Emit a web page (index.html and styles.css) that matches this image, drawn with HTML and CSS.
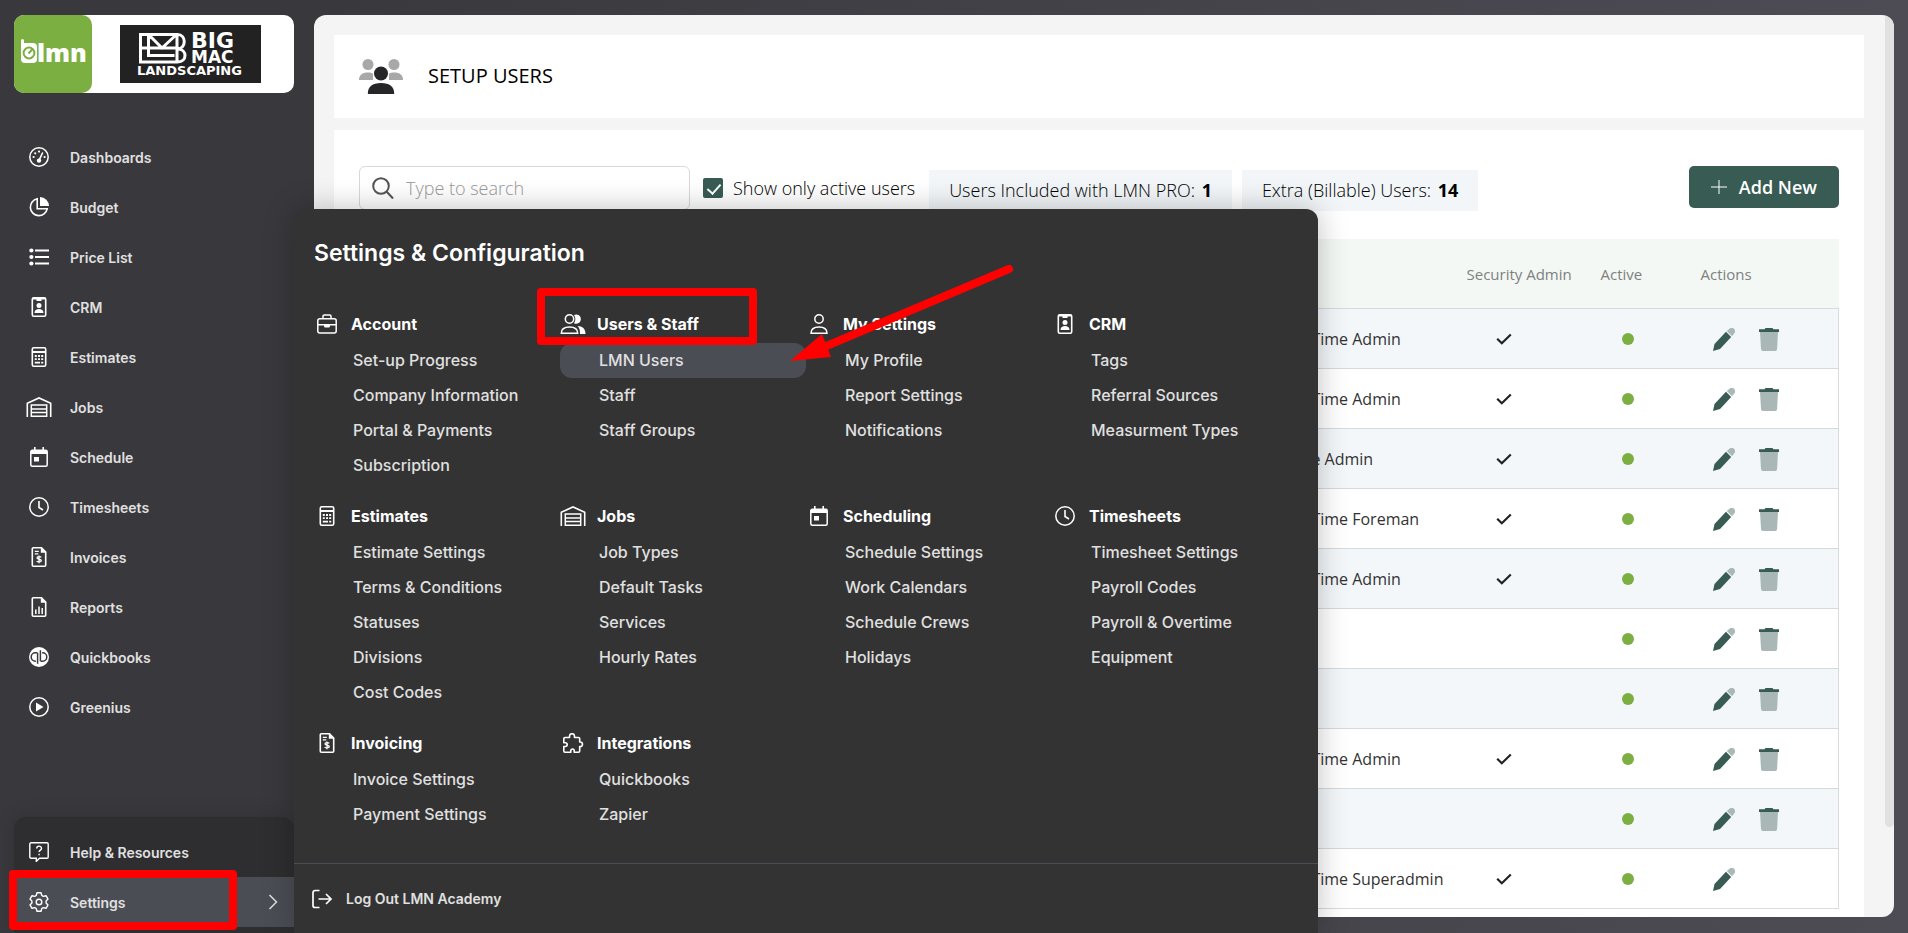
FILE: index.html
```html
<!DOCTYPE html>
<html lang="en">
<head>
  <meta charset="UTF-8">
  <meta name="viewport" content="width=device-width, initial-scale=1.0">
  <link rel="stylesheet" href="styles.css">
  <title>Setup Users</title>
</head>
<body>
  <!-- icon set -->
  <svg class="sprite" aria-hidden="true">
    <symbol id="i-dash" viewBox="0 0 20 20"><circle cx="10" cy="10" r="9.2" fill="none" stroke="currentColor" stroke-width="1.5"/><circle cx="4.6" cy="10" r="1.1"/><circle cx="6.2" cy="6.3" r="1.1"/><circle cx="10" cy="4.6" r="1.1"/><circle cx="15.6" cy="10" r="1.1"/><circle cx="10" cy="13.6" r="2.2"/><path d="M10 13.4 13.5 6" stroke="currentColor" stroke-width="1.6" stroke-linecap="round"/></symbol>
    <symbol id="i-budget" viewBox="0 0 20 20"><path d="M8.2 1.8a8.5 8.5 0 1 0 10 10H8.2z" fill="none" stroke="currentColor" stroke-width="1.6"/><path d="M11 0a9 9 0 0 1 9 9h-9z"/></symbol>
    <symbol id="i-list" viewBox="0 0 20 20"><circle cx="2.4" cy="3.5" r="2.1"/><circle cx="2.4" cy="10" r="2.1"/><circle cx="2.4" cy="16.5" r="2.1"/><path d="M6 3.5h14M6 10h14M6 16.5h14" stroke="currentColor" stroke-width="1.8"/></symbol>
    <symbol id="i-crm" viewBox="0 0 20 20"><rect x="3.3" y=".8" width="13.4" height="18.4" rx="1.4" fill="none" stroke="currentColor" stroke-width="1.6"/><path d="M3 1h14v1.5h-4.5V4h-5V2.5H3z"/><circle cx="10" cy="8.5" r="2.5"/><path d="M5.5 16c0-3 2-4 4.5-4s4.5 1 4.5 4z"/></symbol>
    <symbol id="i-calc" viewBox="0 0 20 20"><rect x="3.3" y=".8" width="13.4" height="18.4" rx="1.5" fill="none" stroke="currentColor" stroke-width="1.6"/><path d="M3 5h14M5.8 9h2M9 9h2M12.2 9h2M5.8 12.2h2M9 12.2h2M12.2 12.2h2M5.8 15.6h5.2M12.2 15.6h2" stroke="currentColor" stroke-width="1.8"/></symbol>
    <symbol id="i-jobs" viewBox="0 0 25 20"><path d="M.8 20V6.2L12.5 1l11.7 5.2V20" fill="none" stroke="currentColor" stroke-width="1.6"/><path d="M4.8 8h15.4v11.2H4.8zM5 12h15M5 15.6h15" fill="none" stroke="currentColor" stroke-width="1.5"/></symbol>
    <symbol id="i-cal" viewBox="0 0 20 20"><rect x="1.8" y="3.3" width="16.4" height="15.9" rx="1.5" fill="none" stroke="currentColor" stroke-width="1.5"/><path d="M2 3h16v4H2zM5 0h1.6v4H5zM13.4 0H15v4h-1.6z"/><rect x="5" y="10" width="5" height="4.5"/></symbol>
    <symbol id="i-clock" viewBox="0 0 20 20"><circle cx="10" cy="10" r="9.2" fill="none" stroke="currentColor" stroke-width="1.5"/><path d="M10 4v6.5l4 2.5" fill="none" stroke="currentColor" stroke-width="1.6"/></symbol>
    <symbol id="i-invoice" viewBox="0 0 20 20"><path d="M4.5.8h8l4.2 4.3v13.1a1 1 0 0 1-1 1H4.3a1 1 0 0 1-1-1V1.8a1 1 0 0 1 1.2-1z" fill="none" stroke="currentColor" stroke-width="1.6"/><path d="M11.8.5v5.3h5z"/><path d="M5.8 4.3h4M5.8 6.8h3.5M12.2 10.3c-.5-.8-4.2-1-4.2.7 0 1.6 4.3.9 4.3 2.7 0 1.6-3.8 1.6-4.6.3M10 8.5v7.7" fill="none" stroke="currentColor" stroke-width="1.3"/></symbol>
    <symbol id="i-report" viewBox="0 0 20 20"><path d="M4.5.8h8l4.2 4.3v13.1a1 1 0 0 1-1 1H4.3a1 1 0 0 1-1-1V1.8a1 1 0 0 1 1.2-1z" fill="none" stroke="currentColor" stroke-width="1.6"/><path d="M11.8.5v5.3h5z"/><path d="M6.8 12.5V17M10 9.5V17M13.2 11V17" stroke="currentColor" stroke-width="1.5"/></symbol>
    <symbol id="i-qb" viewBox="0 0 20 20"><circle cx="10" cy="10" r="10"/><path d="M8.3 5.8H6.4a4.2 4.2 0 0 0 0 8.4h.5M8.6 5.8v11M11.7 14.2h1.9a4.2 4.2 0 0 0 0-8.4h-.5M11.4 14.2v-11" fill="none" stroke="#39383c" stroke-width="1.5"/></symbol>
    <symbol id="i-play" viewBox="0 0 20 20"><circle cx="10" cy="10" r="9.2" fill="none" stroke="currentColor" stroke-width="1.5"/><path d="M7 5.5v9l7.5-4.5z"/></symbol>
    <symbol id="i-help" viewBox="0 0 20 20"><path d="M2 .8h16a1.2 1.2 0 0 1 1.2 1.2v13a1.2 1.2 0 0 1-1.2 1.2h-7.5L7.3 19.4v-3.2H2A1.2 1.2 0 0 1 .8 15V2A1.2 1.2 0 0 1 2 .8z" fill="none" stroke="currentColor" stroke-width="1.4"/><path d="M7.7 6.6c0-3.2 4.8-3.2 4.8-.2 0 1.7-2.4 1.8-2.4 3.7M10.1 11.7v1.6" fill="none" stroke="currentColor" stroke-width="1.4"/></symbol>
    <symbol id="i-gear" viewBox="0 0 20 20"><path d="M8 .8h4l.8 2.7 1.5.9 2.7-.7 2 3.4-1.9 2v1.8l1.9 2-2 3.4-2.7-.7-1.5.9-.8 2.7H8l-.8-2.7-1.5-.9-2.7.7-2-3.4 1.9-2V9.1L1 7.1l2-3.4 2.7.7 1.5-.9z" fill="none" stroke="currentColor" stroke-width="1.4" stroke-linejoin="round"/><circle cx="10" cy="10" r="2.8" fill="none" stroke="currentColor" stroke-width="1.4"/></symbol>
    <symbol id="i-case" viewBox="0 0 20 20"><rect x=".8" y="4.8" width="18.4" height="14.2" rx="2" fill="none" stroke="currentColor" stroke-width="1.5"/><path d="M6 4.5V2.3A1.3 1.3 0 0 1 7.3 1h5.4A1.3 1.3 0 0 1 14 2.3v2.2M1 10.8h18" fill="none" stroke="currentColor" stroke-width="1.5"/><path d="M7 10.5h6V12c0 1-.8 1.5-1.5 1.5h-3C7.8 13.5 7 13 7 12z"/></symbol>
    <symbol id="i-users" viewBox="0 0 25 20"><circle cx="9" cy="5" r="4.2" fill="none" stroke="currentColor" stroke-width="1.5"/><path d="M.8 19.2c0-4.3 2.8-6.3 8.2-6.3s8.2 2 8.2 6.3z" fill="none" stroke="currentColor" stroke-width="1.5"/><path d="M13.5.9a4.7 4.7 0 1 1 0 8.4c1.8-2.5 1.8-5.9 0-8.4zM17 12c5 .3 8 2.5 8 8h-5.5c0-4-.5-6-2.5-8z"/></symbol>
    <symbol id="i-user" viewBox="0 0 20 20"><circle cx="10" cy="5" r="4.2" fill="none" stroke="currentColor" stroke-width="1.5"/><path d="M2 19.2c0-4.3 2.6-6.3 8-6.3s8 2 8 6.3z" fill="none" stroke="currentColor" stroke-width="1.5"/></symbol>
    <symbol id="i-puzzle" viewBox="0 0 20 20"><path d="M2 4.5H6.5V3.2a2.4 2.4 0 0 1 5 0v1.3h4a1.2 1.2 0 0 1 1.2 1.2V9h.5a2.3 2.3 0 0 1 0 4.6h-.5v4.400a1.2 1.2 0 0 1-1.200 1.200h-4.300v-1.500a1.700 1.700 0 0 0-3.400 0v1.500H2a1.200 1.200 0 0 1-1.200-1.200v-4.500h1.500a1.900 1.900 0 0 0 0-3.800H.8V5.700A1.200 1.200 0 0 1 2 4.500z" fill="none" stroke="currentColor" stroke-width="1.6" stroke-linejoin="round"/></symbol>
    <symbol id="i-logout" viewBox="0 0 20 20"><path d="M7.5 1.5H3A2 2 0 0 0 1 3.5v13a2 2 0 0 0 2 2h4.5M6.5 10H19M14 5l5 5-5 5" fill="none" stroke="currentColor" stroke-width="1.7"/></symbol>
    <symbol id="i-check" viewBox="0 0 16 12"><path d="M1.2 5.8 5.8 10.2 14.8 1.5" fill="none" stroke="#222" stroke-width="2.2"/></symbol>
    <symbol id="i-pencil" viewBox="0 0 22 23"><path d="M0 23l1.5-7L13 3.8l5.200 5.200L7 21z" fill="#385c53"/><path d="M13.800 3 16.500.8a3 3 0 0 1 4.500 0 3.500 3.500 0 0 1 0 4.900L19 8.200z" fill="#a9b8b6"/></symbol>
    <symbol id="i-trash" viewBox="0 0 20 23"><path d="M1 4h18l-.9 17a2 2 0 0 1-2 2H4a2 2 0 0 1-2-2z" fill="#a9b8b6"/><path d="M0 1.2h5.500L6.500 0h7l1 1.200H20V4H0z" fill="#385c53"/></symbol>
  </svg>

  <aside class="sidebar">
    <div class="brand">
      <svg class="brand-lmn" viewBox="0 0 78 78" role="img" aria-label="lmn">
        <path d="M8.5 25.5v18" stroke="#fff" stroke-width="3" stroke-linecap="round"/>
        <rect x="7" y="28" width="16" height="20" rx="4" fill="#fff"/>
        <circle cx="15" cy="38" r="5.4" fill="none" stroke="#7caf41" stroke-width="2"/>
        <path d="M14.5 38.5 18.5 34" stroke="#7caf41" stroke-width="2"/>
        <text x="23" y="47" class="lmn-text">lmn</text>
      </svg>
      <svg class="brand-company" viewBox="0 0 141 58" role="img" aria-label="Big Mac Landscaping">
        <rect width="141" height="58" fill="#222"/>
        <g fill="none" stroke="#fff" stroke-width="3">
          <path d="M20.5 9.5h37c9 0 9 14 0 14.5 10 0 10 13 0 13h-37zM28.5 9.5v21h26M57 9.5V37M20.5 23h37M29 10l13 13 14-13"/>
        </g>
        <text x="71" y="23" class="co-big">BIG</text>
        <text x="71" y="38" class="co-mac">MAC</text>
        <text x="17" y="50" class="co-land">LANDSCAPING</text>
      </svg>
    </div>

    <nav class="nav">
      <a href="#"><svg class="icon"><use href="#i-dash"/></svg>Dashboards</a>
      <a href="#"><svg class="icon"><use href="#i-budget"/></svg>Budget</a>
      <a href="#"><svg class="icon"><use href="#i-list"/></svg>Price List</a>
      <a href="#"><svg class="icon"><use href="#i-crm"/></svg>CRM</a>
      <a href="#"><svg class="icon"><use href="#i-calc"/></svg>Estimates</a>
      <a href="#"><svg class="icon"><use href="#i-jobs"/></svg>Jobs</a>
      <a href="#"><svg class="icon"><use href="#i-cal"/></svg>Schedule</a>
      <a href="#"><svg class="icon"><use href="#i-clock"/></svg>Timesheets</a>
      <a href="#"><svg class="icon"><use href="#i-invoice"/></svg>Invoices</a>
      <a href="#"><svg class="icon"><use href="#i-report"/></svg>Reports</a>
      <a href="#"><svg class="icon"><use href="#i-qb"/></svg>Quickbooks</a>
      <a href="#"><svg class="icon"><use href="#i-play"/></svg>Greenius</a>
    </nav>

    <nav class="nav nav-bottom">
      <a href="#"><svg class="icon"><use href="#i-help"/></svg>Help &amp; Resources</a>
      <a href="#" class="active"><svg class="icon"><use href="#i-gear"/></svg>Settings
        <svg class="chevron" viewBox="0 0 10 16"><path d="M1.5 1 8.5 8l-7 7" fill="none" stroke="currentColor" stroke-width="1.5"/></svg>
      </a>
      <div class="mark mark-settings"></div>
    </nav>
  </aside>

  <main class="content">
    <header class="card page-title">
      <svg viewBox="0 0 44 35"><g fill="#a8a8a8"><ellipse cx="9" cy="5.5" rx="5.5" ry="5.5"/><ellipse cx="35" cy="5.5" rx="5.5" ry="5.5"/><path d="M0 21c0-5 3-7.5 9-7.5 3 0 4.5.5 5 1.5V21zM44 21c0-5-3-7.5-9-7.5-3 0-4.5.5-5 1.5V21z"/></g><ellipse cx="22" cy="14.5" rx="7" ry="7" fill="#262628"/><path d="M8.8 35c0-7.500 4.500-11 13.200-11s13.200 3.500 13.200 11z" fill="#262628"/></svg>
      <h1>SETUP USERS</h1>
    </header>

    <section class="card users">
      <div class="toolbar">
        <label class="search">
          <svg viewBox="0 0 22 22"><circle cx="9" cy="9" r="7.8" fill="none" stroke="#555" stroke-width="2"/><path d="M14.5 14.5 21 21.5" stroke="#555" stroke-width="2"/></svg>
          <input type="text" placeholder="Type to search" aria-label="Type to search">
        </label>
        <label class="only-active"><input type="checkbox" checked>Show only active users</label>
        <div class="counts">
          <div class="count">Users Included with LMN PRO: <b>1</b></div>
          <div class="count">Extra (Billable) Users: <b>14</b></div>
        </div>
        <button class="add-btn"><svg viewBox="0 0 16 16"><path d="M8 1v14M0 8h16" stroke="#fff" stroke-width="1"/></svg>Add New</button>
      </div>

      <table>
        <thead>
          <tr><th></th><th class="role"></th><th class="sec">Security Admin</th><th class="act">Active</th><th class="ops">Actions</th></tr>
        </thead>
        <tbody>
          <tr><td></td><td>Part Time Admin</td><td class="sec"><svg><use href="#i-check"/></svg></td><td class="act"><span class="dot"></span></td><td class="ops"><button aria-label="Edit"><svg><use href="#i-pencil"/></svg></button><button aria-label="Delete"><svg><use href="#i-trash"/></svg></button></td></tr>
          <tr><td></td><td>Part Time Admin</td><td class="sec"><svg><use href="#i-check"/></svg></td><td class="act"><span class="dot"></span></td><td class="ops"><button aria-label="Edit"><svg><use href="#i-pencil"/></svg></button><button aria-label="Delete"><svg><use href="#i-trash"/></svg></button></td></tr>
          <tr><td></td><td>Office Admin</td><td class="sec"><svg><use href="#i-check"/></svg></td><td class="act"><span class="dot"></span></td><td class="ops"><button aria-label="Edit"><svg><use href="#i-pencil"/></svg></button><button aria-label="Delete"><svg><use href="#i-trash"/></svg></button></td></tr>
          <tr><td></td><td>Part Time Foreman</td><td class="sec"><svg><use href="#i-check"/></svg></td><td class="act"><span class="dot"></span></td><td class="ops"><button aria-label="Edit"><svg><use href="#i-pencil"/></svg></button><button aria-label="Delete"><svg><use href="#i-trash"/></svg></button></td></tr>
          <tr><td></td><td>Part Time Admin</td><td class="sec"><svg><use href="#i-check"/></svg></td><td class="act"><span class="dot"></span></td><td class="ops"><button aria-label="Edit"><svg><use href="#i-pencil"/></svg></button><button aria-label="Delete"><svg><use href="#i-trash"/></svg></button></td></tr>
          <tr><td></td><td></td><td class="sec"></td><td class="act"><span class="dot"></span></td><td class="ops"><button aria-label="Edit"><svg><use href="#i-pencil"/></svg></button><button aria-label="Delete"><svg><use href="#i-trash"/></svg></button></td></tr>
          <tr><td></td><td></td><td class="sec"></td><td class="act"><span class="dot"></span></td><td class="ops"><button aria-label="Edit"><svg><use href="#i-pencil"/></svg></button><button aria-label="Delete"><svg><use href="#i-trash"/></svg></button></td></tr>
          <tr><td></td><td>Part Time Admin</td><td class="sec"><svg><use href="#i-check"/></svg></td><td class="act"><span class="dot"></span></td><td class="ops"><button aria-label="Edit"><svg><use href="#i-pencil"/></svg></button><button aria-label="Delete"><svg><use href="#i-trash"/></svg></button></td></tr>
          <tr><td></td><td></td><td class="sec"></td><td class="act"><span class="dot"></span></td><td class="ops"><button aria-label="Edit"><svg><use href="#i-pencil"/></svg></button><button aria-label="Delete"><svg><use href="#i-trash"/></svg></button></td></tr>
          <tr><td></td><td>Part Time Superadmin</td><td class="sec"><svg><use href="#i-check"/></svg></td><td class="act"><span class="dot"></span></td><td class="ops"><button aria-label="Edit"><svg><use href="#i-pencil"/></svg></button></td></tr>
        </tbody>
      </table>
    </section>
    <div class="scroll-thumb"></div>
  </main>

  <!-- settings flyout -->
  <div class="flyout">
    <h2>Settings &amp; Configuration</h2>
    <div class="groups">
      <section>
        <h3><svg class="icon"><use href="#i-case"/></svg>Account</h3>
        <a href="#">Set-up Progress</a>
        <a href="#">Company Information</a>
        <a href="#">Portal &amp; Payments</a>
        <a href="#">Subscription</a>
      </section>
      <section>
        <h3><svg class="icon"><use href="#i-users"/></svg>Users &amp; Staff</h3>
        <a href="#" class="selected">LMN Users</a>
        <a href="#">Staff</a>
        <a href="#">Staff Groups</a>
      </section>
      <section>
        <h3><svg class="icon"><use href="#i-user"/></svg>My Settings</h3>
        <a href="#">My Profile</a>
        <a href="#">Report Settings</a>
        <a href="#">Notifications</a>
      </section>
      <section>
        <h3><svg class="icon"><use href="#i-crm"/></svg>CRM</h3>
        <a href="#">Tags</a>
        <a href="#">Referral Sources</a>
        <a href="#">Measurment Types</a>
      </section>
      <section>
        <h3><svg class="icon"><use href="#i-calc"/></svg>Estimates</h3>
        <a href="#">Estimate Settings</a>
        <a href="#">Terms &amp; Conditions</a>
        <a href="#">Statuses</a>
        <a href="#">Divisions</a>
        <a href="#">Cost Codes</a>
      </section>
      <section>
        <h3><svg class="icon"><use href="#i-jobs"/></svg>Jobs</h3>
        <a href="#">Job Types</a>
        <a href="#">Default Tasks</a>
        <a href="#">Services</a>
        <a href="#">Hourly Rates</a>
      </section>
      <section>
        <h3><svg class="icon"><use href="#i-cal"/></svg>Scheduling</h3>
        <a href="#">Schedule Settings</a>
        <a href="#">Work Calendars</a>
        <a href="#">Schedule Crews</a>
        <a href="#">Holidays</a>
      </section>
      <section>
        <h3><svg class="icon"><use href="#i-clock"/></svg>Timesheets</h3>
        <a href="#">Timesheet Settings</a>
        <a href="#">Payroll Codes</a>
        <a href="#">Payroll &amp; Overtime</a>
        <a href="#">Equipment</a>
      </section>
      <section>
        <h3><svg class="icon"><use href="#i-invoice"/></svg>Invoicing</h3>
        <a href="#">Invoice Settings</a>
        <a href="#">Payment Settings</a>
      </section>
      <section>
        <h3><svg class="icon"><use href="#i-puzzle"/></svg>Integrations</h3>
        <a href="#">Quickbooks</a>
        <a href="#">Zapier</a>
      </section>
    </div>
    <a href="#" class="logout"><svg class="icon"><use href="#i-logout"/></svg>Log Out LMN Academy</a>
    <div class="mark mark-users"></div>
    <svg class="arrow" viewBox="0 0 224 100"><path d="M219 7 34 85" stroke="#f00" stroke-width="8" stroke-linecap="round"/><path d="M0 99 32 72l9 23z" fill="#f00"/></svg>
  </div>
</body>
</html>
```
FILE: styles.css
```css
* {
    box-sizing: border-box;
}

body {
    margin: 0;
    height: 100vh;
    display: flex;
    overflow: hidden;
    position: relative;
    background: linear-gradient(90deg, #39383c 0%, #39383c 16%, #4d4c55 100%);
    font-family: "Open Sans", sans-serif;
    color: #000;
}

a {
    color: inherit;
    text-decoration: none;
}

button {
    border: none;
    background: none;
    padding: 0;
    font: inherit;
    cursor: pointer;
}

.sprite {
    position: absolute;
    width: 0;
    height: 0;
}

.icon {
    width: 26px;
    height: 20px;
    flex: none;
    fill: currentColor;
    color: #fff;
}

/* sidebar */
.sidebar {
    width: 294px;
    flex: none;
    display: flex;
    flex-direction: column;
    padding: 15px 0 0 14px;
    font-family: "Proxima Nova", Inter, sans-serif;
}

.brand {
    display: flex;
    align-items: center;
    background: #fff;
    border-radius: 10px;
    height: 78px;
}

.brand-lmn {
    width: 78px;
    height: 78px;
    background: #7caf41;
    border-radius: 10px;
}

.brand-company {
    width: 141px;
    height: 58px;
    margin: 0 auto 0 28px;
}

.lmn-text {
    font: 800 25px "Open Sans", sans-serif;
    fill: #fff;
}

.co-big,
.co-mac,
.co-land {
    font-family: "DejaVu Sans", sans-serif;
    font-weight: bold;
    fill: #fff;
}

.co-big {
    font-size: 22px;
}

.co-mac {
    font-size: 17px;
}

.co-land {
    font-size: 13px;
}

.nav {
    margin-top: 39px;
    display: flex;
    flex-direction: column;
}

.nav a {
    display: flex;
    align-items: center;
    height: 50px;
    padding-left: 12px;
    gap: 18px;
    font-size: 14px;
    font-weight: 600;
    color: #e0e0e0;
}

.nav-bottom {
    position: relative;
    margin-top: auto;
    padding: 10px 0 6px;
    background: #2e2e30;
    border-radius: 12px 12px 0 0;
    box-shadow: 0 0 20px rgba(0, 0, 0, 0.15);
}

.nav .active {
    background: #4b4d55;
}

.chevron {
    width: 10px;
    height: 16px;
    margin-left: auto;
    margin-right: 16px;
}

/* main area */
.content {
    flex: 1;
    position: relative;
    margin: 15px 14px 16px 20px;
    padding: 20px 30px 0 20px;
    background: #f4f4f4;
    border-radius: 12px;
    overflow: hidden;
    display: flex;
    flex-direction: column;
    gap: 12px;
}

.card {
    background: #fff;
    padding: 0 25px;
}

.page-title {
    display: flex;
    align-items: center;
    flex: none;
    height: 83px;
    gap: 25px;
}

.page-title svg {
    width: 44px;
    height: 35px;
}

h1 {
    margin: 0;
    padding-bottom: 2px;
    font-size: 20px;
    font-weight: 500;
}

.users {
    flex: 1 0 auto;
    padding-top: 36px;
}

.toolbar {
    display: flex;
    align-items: center;
    height: 44px;
    margin-bottom: 29px;
    font-size: 18px;
    font-weight: 300;
    white-space: nowrap;
}

.search {
    display: flex;
    align-items: center;
    width: 331px;
    height: 44px;
    padding: 0 12px;
    gap: 12px;
    border: 1px solid #d8d8d8;
    border-radius: 6px;
}

.search svg {
    width: 22px;
    height: 22px;
    flex: none;
}

.search input {
    flex: 1;
    min-width: 0;
    border: none;
    outline: none;
    padding: 0;
    font: inherit;
    background: none;
}

.search input::placeholder {
    color: #999;
}

.only-active {
    display: flex;
    align-items: center;
    gap: 10px;
    margin-left: 13px;
}

.only-active input {
    appearance: none;
    position: relative;
    width: 20px;
    height: 20px;
    margin: 0;
    background: #385c53;
    border-radius: 2px;
}

.only-active input:checked::after {
    content: "";
    position: absolute;
    left: 7px;
    top: 3px;
    width: 6px;
    height: 11px;
    border: solid #fff;
    border-width: 0 2px 2px 0;
    transform: rotate(42deg);
}

.counts {
    display: flex;
    gap: 10px;
    margin-left: 14px;
    padding-top: 4px;
}

.count {
    height: 41px;
    line-height: 41px;
    padding: 0 20px;
    background: #f2f6f9;
}

.count b {
    margin-left: 2px;
    font-weight: 700;
}

.add-btn {
    display: flex;
    align-items: center;
    align-self: flex-start;
    gap: 12px;
    height: 42px;
    margin-left: auto;
    padding: 0 22px;
    background: #385c53;
    border-radius: 5px;
    color: #fff;
    font-weight: 600;
}

.add-btn svg {
    width: 16px;
    height: 16px;
}

table {
    width: 100%;
    border-collapse: collapse;
    table-layout: fixed;
    font-size: 16px;
    color: #333;
}

th {
    height: 69px;
    padding: 2px 10px 0;
    background: #f3f8f4;
    text-align: left;
    font-size: 15px;
    font-weight: 400;
    color: #808080;
}

td {
    height: 60px;
    padding: 2px 10px 0;
}

tbody {
    border: 1px solid #dadcde;
}

tbody tr {
    border-top: 1px solid #d5dade;
}

tbody tr:nth-child(odd) {
    background: #f3f7fa;
}

.role {
    width: 190px;
}

.sec {
    width: 134px;
}

.act {
    width: 100px;
}

.ops {
    width: 148px;
}

td.sec {
    padding-left: 39px;
}

td.act {
    padding-left: 31px;
}

td.ops {
    padding-left: 22px;
}

td svg {
    display: block;
}

.sec svg {
    width: 16px;
    height: 12px;
}

.dot {
    display: block;
    width: 12px;
    height: 12px;
    border-radius: 50%;
    background: #7caf41;
}

.ops button {
    margin-right: 23px;
    vertical-align: middle;
}

.ops button svg {
    width: 22px;
    height: 23px;
}

.ops button + button {
    margin-right: 0;
}

.scroll-thumb {
    position: absolute;
    right: 0;
    top: 0;
    width: 9px;
    height: 90%;
    background: #e1e1e1;
    border-radius: 0 0 5px 5px;
}

/* settings flyout */
.flyout {
    position: absolute;
    left: 294px;
    top: 209px;
    bottom: 0;
    width: 1024px;
    display: flex;
    flex-direction: column;
    padding-top: 24px;
    background: #333;
    border-radius: 12px 12px 0 0;
    box-shadow: 0 0 30px rgba(0, 0, 0, 0.25);
    font-family: "Proxima Nova", Inter, sans-serif;
    color: #fff;
}

h2 {
    margin: 0 20px 32px;
    font-size: 23px;
    line-height: 40px;
    font-weight: 600;
}

.groups {
    display: grid;
    grid-template-columns: repeat(4, 1fr);
    row-gap: 14px;
    padding: 0 20px;
}

h3 {
    display: flex;
    align-items: center;
    height: 38px;
    gap: 11px;
    margin: 0;
    font-size: 16px;
    font-weight: 700;
}

.groups a {
    display: block;
    height: 35px;
    line-height: 35px;
    padding-left: 39px;
    border-radius: 12px;
    font-size: 16px;
    font-weight: 500;
    color: #e0e0e0;
}

.groups .selected {
    background: #4b4d55;
}

.logout {
    display: flex;
    align-items: center;
    gap: 11px;
    height: 70px;
    margin-top: auto;
    padding-left: 15px;
    border-top: 1px solid #4b4d55;
    font-size: 14px;
    font-weight: 600;
    color: #e0e0e0;
}

/* highlights */
.mark {
    position: absolute;
    border: 8px solid #f00;
    border-radius: 4px;
}

.mark-settings {
    left: -5px;
    top: 53px;
    width: 228px;
    height: 60px;
}

.mark-users {
    left: 243px;
    top: 79px;
    width: 220px;
    height: 57px;
}

.arrow {
    position: absolute;
    left: 496px;
    top: 53px;
    width: 224px;
    height: 100px;
}
```
